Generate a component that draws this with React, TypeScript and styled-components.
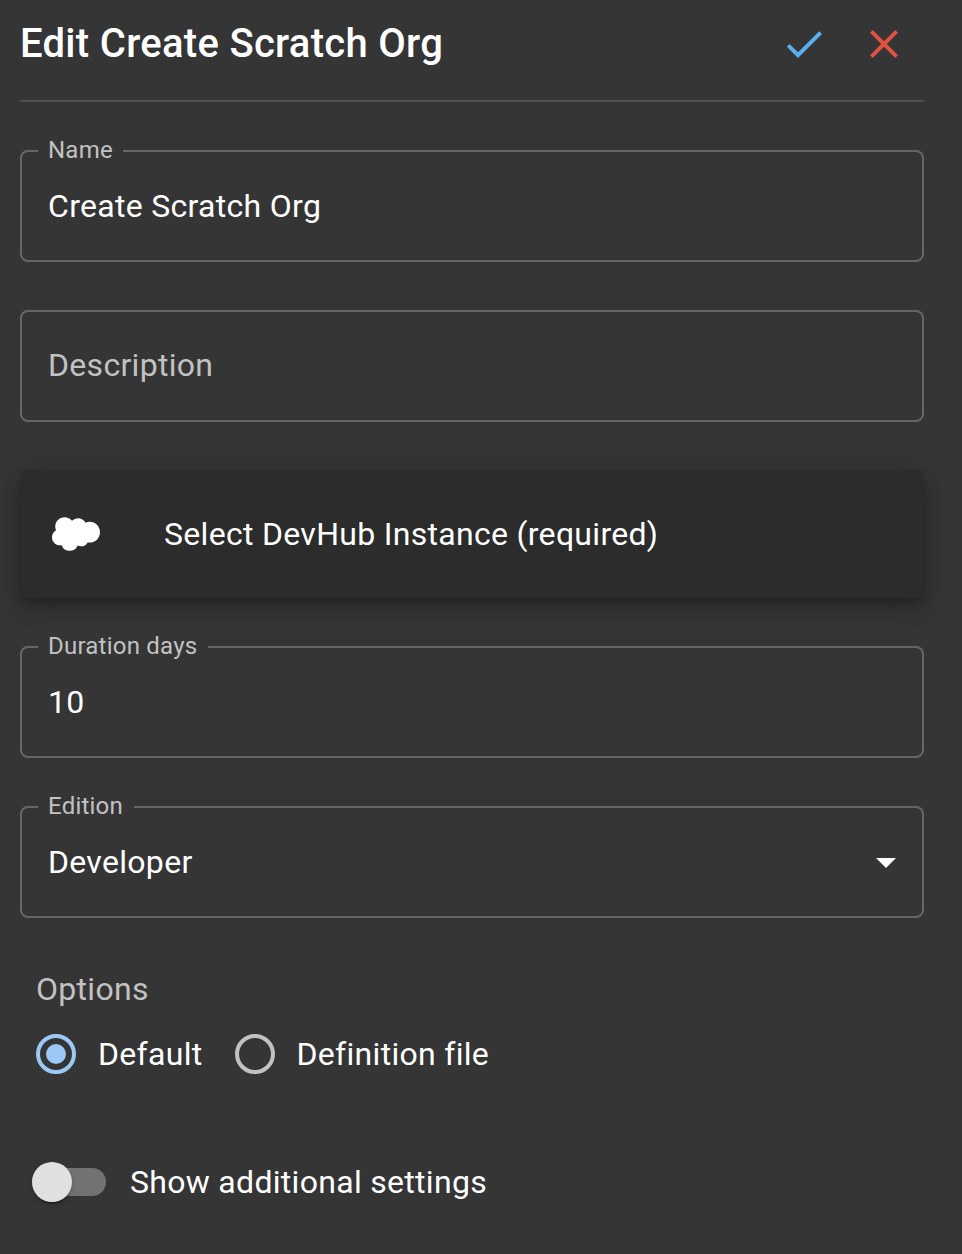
import React from 'react';
import styled, { createGlobalStyle } from 'styled-components';

const Global = createGlobalStyle`
  * { box-sizing: border-box; }
  body { margin: 0; background: #353535; color: #fff; font-family: Roboto, sans-serif; }
`;
const Panel = styled.main`
  width: 962px; height: 1254px; padding: 0 38px 0 20px; background: #353535; overflow: hidden;
  display: flex; flex-direction: column;
`;
const Header = styled.header`
  height: 102px; flex: none; display: flex; justify-content: space-between; align-items: flex-start;
  border-bottom: 2px solid #4f4f4f;
`;
const Title = styled.h1`
  margin: 0; padding-top: 20px; font-size: 40px; line-height: 47px; font-weight: 500; letter-spacing: 0.3px; white-space: nowrap;
`;
const Actions = styled.div`
  display: flex; gap: 32px; padding: 20px 16px 0 0;
`;
const IconButton = styled.button`
  width: 48px; height: 48px; padding: 0; border: 0; background: none; display: grid; place-items: center;
`;
const Field = styled.fieldset<{ $top: number; $labelled?: boolean }>`
  flex: none; min-width: 0; height: ${p => (p.$labelled ? 124 : 112)}px; margin: ${p => p.$top}px 0 0; padding: 0 26px 0 16px;
  border: 2px solid #666; border-radius: 8px;
`;
const Legend = styled.legend`
  height: 26px; padding: 0 10.6px 0 10px; font-size: 24px; line-height: 24px; letter-spacing: 0.225px; color: #c2c2c2;
`;
const Value = styled.div<{ $muted?: boolean; $labelled?: boolean }>`
  height: ${p => (p.$labelled ? 84 : 106)}px; padding-left: 10px; display: flex; align-items: center; justify-content: space-between;
  font-size: 32px; line-height: 38px; letter-spacing: 0.3px; color: ${p => (p.$muted ? '#c2c2c2' : '#fff')};
`;
const Caret = styled.svg`
  margin-top: 2px;
`;
const Instance = styled.button`
  flex: none; height: 128px; margin-top: 48px; padding: 0 32px; border: 0; border-radius: 8px; background: #2c2c2c; color: #fff;
  display: flex; align-items: center; gap: 64px; font: 400 32px/38px Roboto, sans-serif; letter-spacing: 0.3px; text-align: left;
  box-shadow: 0 6px 10px -2px rgba(0,0,0,.2), 0 12px 20px rgba(0,0,0,.14), 0 2px 36px rgba(0,0,0,.12);
`;
const OptionsLabel = styled.div`
  margin: 52px 0 0 16px; font-size: 32px; line-height: 38px; letter-spacing: 0.3px; color: #c2c2c2;
`;
const RadioGroup = styled.div`
  display: flex; align-items: center; gap: 32px; margin: 26px 0 0 16px;
`;
const Choice = styled.label`
  display: flex; align-items: center; gap: 22px; height: 40px; font-size: 32px; letter-spacing: 0.3px;
`;
const Radio = styled.span<{ $checked?: boolean }>`
  width: 40px; height: 40px; border: 4px solid ${p => (p.$checked ? '#9bc8f5' : '#c2c2c2')}; border-radius: 50%; display: grid; place-items: center;
  &::after { content: ''; width: 20px; height: 20px; border-radius: 50%; background: ${p => (p.$checked ? '#9bc8f5' : 'transparent')}; }
`;
const SwitchRow = styled.label`
  display: flex; align-items: center; gap: 24px; height: 40px; margin: 88px 0 0 12px; font-size: 32px; letter-spacing: 0.3px;
`;
const Track = styled.span`
  width: 74px; height: 28px; border-radius: 14px; background: #727272; display: flex; align-items: center;
`;
const Thumb = styled.span`
  width: 40px; height: 40px; border-radius: 50%; background: #e0e0e0; flex: none;
  box-shadow: 0 4px 2px -2px rgba(0,0,0,.2), 0 2px 2px rgba(0,0,0,.14), 0 2px 6px rgba(0,0,0,.12);
`;

export default function App() {
  return (
    <>
      <Global />
      <Panel>
        <Header>
          <Title>Edit Create Scratch Org</Title>
          <Actions>
            <IconButton aria-label="Save"><svg width="48" height="48" viewBox="0 0 24 24" fill="#5aaff0"><path d="M9 16.17 4.83 12l-1.42 1.41L9 19 21 7l-1.41-1.41z" /></svg></IconButton>
            <IconButton aria-label="Cancel"><svg width="48" height="48" viewBox="0 0 24 24" fill="#e25241"><path d="M19 6.41 17.59 5 12 10.59 6.41 5 5 6.41 10.59 12 5 17.59 6.41 19 12 13.41 17.59 19 19 17.59 13.41 12z" /></svg></IconButton>
          </Actions>
        </Header>
        <Field $top={36} $labelled><Legend>Name</Legend><Value $labelled>Create Scratch Org</Value></Field>
        <Field $top={48}><Value $muted>Description</Value></Field>
        <Instance>
          <svg width="48" height="48" viewBox="0 0 24 24" fill="#fff"><path d="M10.006 5.415a4.195 4.195 0 0 1 3.045-1.306c1.56 0 2.954.9 3.69 2.205.63-.3 1.35-.45 2.1-.45 2.85 0 5.159 2.34 5.159 5.22s-2.31 5.22-5.176 5.22c-.345 0-.69-.044-1.02-.104a3.75 3.75 0 0 1-3.3 1.95c-.6 0-1.155-.15-1.65-.375A4.314 4.314 0 0 1 8.88 20.4a4.302 4.302 0 0 1-4.05-2.82c-.27.062-.54.076-.825.076-2.204 0-4.005-1.8-4.005-4.05 0-1.5.811-2.805 2.01-3.51-.255-.57-.39-1.2-.39-1.846 0-2.58 2.1-4.65 4.65-4.65 1.53 0 2.85.705 3.72 1.8" /></svg>
          Select DevHub Instance (required)
        </Instance>
        <Field $top={36} $labelled><Legend>Duration days</Legend><Value $labelled>10</Value></Field>
        <Field $top={36} $labelled><Legend>Edition</Legend><Value $labelled>Developer<Caret width="20" height="10" viewBox="0 0 20 10" fill="#fff"><path d="M0 0 10 10 20 0z" /></Caret></Value></Field>
        <OptionsLabel>Options</OptionsLabel>
        <RadioGroup>
          <Choice><Radio $checked />Default</Choice>
          <Choice><Radio />Definition file</Choice>
        </RadioGroup>
        <SwitchRow><Track><Thumb /></Track>Show additional settings</SwitchRow>
      </Panel>
    </>
  );
}
